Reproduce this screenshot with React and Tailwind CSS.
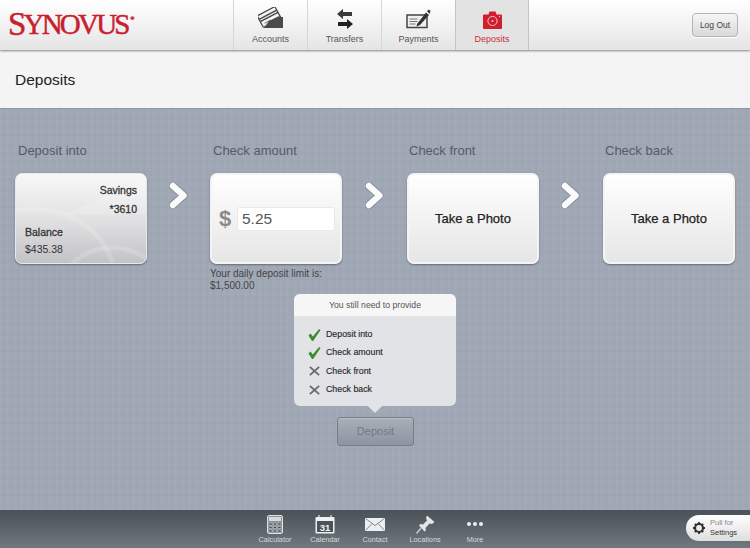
import React from 'react';

const AccountsIcon = () => (
  <svg width="26" height="22" viewBox="0 0 26 22">
    <g transform="rotate(-28 10 10)">
      <rect x="1" y="4" width="20" height="13" rx="1" fill="#f4f4f4" stroke="#444" strokeWidth="1.2" />
      <path d="M1 8h20M1 10.5h20" stroke="#444" strokeWidth="1.4" />
      <path d="M4 14h7" stroke="#777" strokeWidth="1" />
    </g>
    <path d="M6 21 L11 14 L21 9 L22 10 L25 10 V21 Z" fill="#4a4a4a" />
  </svg>
);

const TransfersIcon = () => (
  <svg width="16" height="20" viewBox="0 0 16 20">
    <path d="M0 5 L6 0 V3 H15 V7 H6 V10 Z" fill="#3a3a3a" />
    <path d="M16 15 L10 10 V13 H1 V17 H10 V20 Z" fill="#222" />
  </svg>
);

const PaymentsIcon = () => (
  <svg width="25" height="20" viewBox="0 0 25 20">
    <rect x="1" y="6" width="20" height="12.5" fill="#efefef" stroke="#444" strokeWidth="1.5" />
    <path d="M3.5 10h8M3.5 12.5h8M3.5 15h6" stroke="#777" strokeWidth="1" />
    <path d="M11 15 L20 3.5 L23 6 L14 16 L10.5 17.5 Z" fill="#333" />
    <path d="M21 2 L23 0.5 L24.5 2 L23.5 5 Z" fill="#333" />
  </svg>
);

const CameraIcon = () => (
  <svg width="19" height="18" viewBox="0 0 19 18">
    <path d="M1 3.5 H5.5 L6.5 0.5 H12.5 L13.5 3.5 H18 A1 1 0 0 1 19 4.5 V17 A1 1 0 0 1 18 18 H1 A1 1 0 0 1 0 17 V4.5 A1 1 0 0 1 1 3.5 Z" fill="#cf1f2e" />
    <circle cx="9.5" cy="10" r="4.6" fill="none" stroke="#f3c4c8" strokeWidth="1" />
    <circle cx="9.5" cy="10" r="1" fill="#f3c4c8" />
    <circle cx="16.5" cy="5.5" r="0.7" fill="#f3c4c8" />
  </svg>
);

const CalculatorIcon = () => (
  <svg width="16" height="19" viewBox="0 0 16 19">
    <rect x="0.5" y="0.5" width="15" height="18" rx="1.5" fill="#8b9297" stroke="#dfe2e4" />
    <rect x="2" y="2" width="12" height="4" fill="#d6dadc" />
    <path d="M2 8h3v2H2zM6.5 8h3v2h-3zM11 8h3v2h-3zM2 11.5h3v2H2zM6.5 11.5h3v2h-3zM11 11.5h3v2h-3zM2 15h3v2H2zM6.5 15h3v2h-3zM11 15h3v2h-3z" fill="#3f474d" stroke="#cfd3d6" strokeWidth="0.5" />
  </svg>
);

const CalendarIcon = () => (
  <svg width="20" height="19" viewBox="0 0 20 19">
    <rect x="0.5" y="2" width="19" height="16.5" rx="1" fill="#eef0f1" />
    <rect x="2" y="6" width="16" height="11" fill="#4b5359" />
    <path d="M4 0v3M16 0v3" stroke="#e6e8ea" strokeWidth="1.2" />
    <text x="10" y="15.5" textAnchor="middle" fontSize="9.5" fontWeight="700" fill="#f2f3f4" fontFamily="Liberation Sans, sans-serif">31</text>
  </svg>
);

const MailIcon = () => (
  <svg width="20" height="13" viewBox="0 0 20 13">
    <rect width="20" height="13" fill="#eceeef" />
    <path d="M0.5 0.5 L10 7.5 L19.5 0.5M0.5 12.5 L7 5.5M19.5 12.5 L13 5.5" fill="none" stroke="#6a7278" strokeWidth="0.8" />
  </svg>
);

const PinIcon = () => (
  <svg width="19" height="19" viewBox="0 0 19 19">
    <path d="M11 0.5 L18.5 7 L16 9 L13.5 8.5 L9.5 13 L10 15.5 L8.5 16.5 L3 10.5 L4.5 9 L7 9.5 L11 5.5 L10 3 Z" fill="#e3e6e8" />
    <path d="M5 13 L0.5 18.5" stroke="#d4d8da" strokeWidth="1.2" />
  </svg>
);

const GearIcon = () => (
  <svg width="14" height="14" viewBox="0 0 14 14">
    <circle cx="7" cy="7" r="4" fill="none" stroke="#333" strokeWidth="2.2" />
    <path d="M7 1v2M7 11v2M1 7h2M11 7h2M2.8 2.8l1.4 1.4M9.8 9.8l1.4 1.4M2.8 11.2l1.4-1.4M9.8 4.2l1.4-1.4" stroke="#333" strokeWidth="1.8" />
  </svg>
);

const Check = () => (
  <svg width="14" height="14" viewBox="0 0 14 14">
    <path d="M0.5 7.5 L2.8 5.5 L5.2 8.5 L12 0.5 L13.5 1.5 L5.5 13.5 L4.3 13.5 Z" fill="#3f8a2c" />
  </svg>
);

const Cross = () => (
  <svg width="14" height="14" viewBox="0 0 14 14">
    <path d="M2 2.5 L12 11.5M12 2.5 L2 11.5" stroke="#6a6a6a" strokeWidth="2" />
  </svg>
);

const Chevron = ({ width }) => (
  <div className={`flex shrink-0 justify-center pt-[39px] ${width}`}>
    <svg width="20" height="27" viewBox="0 0 20 27">
      <path d="M4 4 L14.5 13.5 L4 23" fill="none" stroke="#868e9b" strokeWidth="8" strokeLinecap="round" strokeLinejoin="round" />
      <path d="M4 4 L14.5 13.5 L4 23" fill="none" stroke="#fbfbfb" strokeWidth="6.4" strokeLinecap="round" strokeLinejoin="round" />
    </svg>
  </div>
);

const tabs = [
  { label: 'Accounts', icon: <AccountsIcon /> },
  { label: 'Transfers', icon: <TransfersIcon /> },
  { label: 'Payments', icon: <PaymentsIcon /> },
  { label: 'Deposits', icon: <CameraIcon />, active: true },
];

const tools = [
  { label: 'Calculator', icon: <CalculatorIcon /> },
  { label: 'Calendar', icon: <CalendarIcon /> },
  { label: 'Contact', icon: <MailIcon /> },
  { label: 'Locations', icon: <PinIcon /> },
  {
    label: 'More',
    icon: (
      <div className="flex gap-[2px]">
        <span className="h-[4px] w-[4px] rounded-full bg-[#eceeef]" />
        <span className="h-[4px] w-[4px] rounded-full bg-[#eceeef]" />
        <span className="h-[4px] w-[4px] rounded-full bg-[#eceeef]" />
      </div>
    ),
  },
];

const needs = [
  { label: 'Deposit into', done: true },
  { label: 'Check amount', done: true },
  { label: 'Check front', done: false },
  { label: 'Check back', done: false },
];

const cardClass =
  'h-[91px] w-[132px] rounded-[7px] border-2 border-[#f4f4f5] bg-gradient-to-b from-white to-[#e6e6e6] shadow-[0_1px_2px_rgba(60,65,75,0.6)]';
const labelClass = 'mb-[14px] h-[16px] pl-[3px] text-[13px] leading-[16px] text-[#565b64]';
const labelClassRight = 'mb-[14px] h-[16px] pl-[2px] text-[13px] leading-[16px] text-[#565b64]';
const photoClass = `${cardClass} flex items-center justify-center pt-[1px] text-[13px] text-[#222] [-webkit-text-stroke:0.25px_#222]`;

const App = () => {
  return (
    <div className="flex h-[548px] w-[750px] flex-col overflow-hidden font-['Liberation_Sans',sans-serif]">
      <header className="relative z-10 flex h-[50px] items-stretch justify-between bg-gradient-to-b from-white to-[#e5e5e5] shadow-[0_1px_2px_rgba(0,0,0,0.45)]">
        <div className="flex w-[233px] items-center pb-[1px] pl-[8px] font-['Liberation_Serif',serif] leading-none tracking-[-2.8px] text-[#c9202f] [-webkit-text-stroke:0.5px_#c9202f]">
          <span className="text-[33px]">S</span>
          <span className="text-[29px]">YNOVUS</span>
          <span className="mb-[12px] ml-[3px] text-[5px] tracking-normal">®</span>
        </div>
        <nav className="flex flex-1">
          {tabs.map(tab => (
            <div
              key={tab.label}
              className={
                tab.active
                  ? 'flex w-[74px] flex-col items-center border-x border-x-[#c4c4c4] bg-[#e3e3e3]'
                  : 'flex w-[74px] flex-col items-center border-l border-l-[#d6d6d6]'
              }
            >
              <div className="flex h-[33px] items-end justify-center pb-[4px]">{tab.icon}</div>
              <span className={tab.active ? 'mt-[1px] text-[9px] leading-[11px] text-[#c9303c]' : 'mt-[1px] text-[9px] leading-[11px] text-[#555]'}>
                {tab.label}
              </span>
            </div>
          ))}
        </nav>
        <div className="flex items-center pr-[12px]">
          <button className="h-[24px] w-[46px] rounded-[4px] border border-[#b5b5b5] bg-gradient-to-b from-[#f6f6f6] to-[#d8d8d8] text-[8.5px] text-[#444] shadow-[0_1px_0_#fff]">
            Log Out
          </button>
        </div>
      </header>

      <div className="flex h-[58px] items-center bg-[#f4f4f4] pl-[15px] pt-[2px] text-[15.5px] text-[#222]">Deposits</div>

      <main className="flex-1 border-t border-t-[#8d95a1] bg-[#a0a8b5] bg-[repeating-linear-gradient(90deg,rgba(255,255,255,0.03)_0_1px,transparent_1px_4px,rgba(70,80,95,0.03)_4px_5px,transparent_5px_7px),repeating-linear-gradient(0deg,rgba(255,255,255,0.025)_0_1px,transparent_1px_5px,rgba(70,80,95,0.03)_5px_6px,transparent_6px_9px)] pt-[34px]">
        <div className="flex pl-[15px]">
          <section className="w-[132px]">
            <div className={labelClass}>Deposit into</div>
            <div className="relative h-[91px] w-[132px] overflow-hidden rounded-[7px] border border-[#e8e8e8] bg-gradient-to-b from-[#f8f8f8] via-[#e2e2e3] to-[#c2c3c6] shadow-[0_1px_2px_rgba(60,65,75,0.6)]">
              <svg className="absolute inset-0" width="132" height="91" viewBox="0 0 132 91">
                <path d="M50 40 L132 2 V40 Z" fill="#fff" opacity="0.18" />
                <path d="M0 37 C45 30 85 50 97 91" fill="none" stroke="#fff" strokeWidth="5" opacity="0.16" />
                <path d="M55 91 C75 70 110 68 132 86" fill="none" stroke="#fff" strokeWidth="5" opacity="0.16" />
              </svg>
              <div className="relative flex h-full flex-col justify-between px-[9px] pb-[7px] pt-[10px] text-[10.5px] text-[#333]">
                <div className="text-right leading-[13px] [-webkit-text-stroke:0.3px_#333]">
                  <div>Savings</div>
                  <div className="mt-[6px]">*3610</div>
                </div>
                <div className="leading-[13px]">
                  <div className="[-webkit-text-stroke:0.3px_#333]">Balance</div>
                  <div className="mt-[4px]">$435.38</div>
                </div>
              </div>
            </div>
          </section>
          <Chevron width="w-[63px]" />
          <section className="w-[132px]">
            <div className={labelClass}>Check amount</div>
            <div className={`${cardClass} flex items-center pl-[7px] pr-[5px]`}>
              <span className="w-[18px] text-[22px] font-bold leading-none text-[#8a8a8a]">$</span>
              <div className="flex h-[24px] flex-1 items-center rounded-[3px] border border-[#e9e9e9] bg-white pl-[4px] text-[15.5px] text-[#555]">
                5.25
              </div>
            </div>
            <div className="mt-[4px] w-[140px] text-[10px] leading-[11.5px] text-[#444]">
              Your daily deposit limit is:
              <br />
              $1,500.00
            </div>
          </section>
          <Chevron width="w-[65px]" />
          <section className="w-[132px]">
            <div className={labelClassRight}>Check front</div>
            <div className={photoClass}>Take a Photo</div>
          </section>
          <Chevron width="w-[64px]" />
          <section className="w-[132px]">
            <div className={labelClassRight}>Check back</div>
            <div className={photoClass}>Take a Photo</div>
          </section>
        </div>

        <div className="mt-[3px] flex flex-col items-center">
          <div className="relative w-[162px] rounded-[6px] bg-[#e1e3e7]">
            <div className="flex h-[22px] items-center justify-center rounded-t-[6px] bg-[#f6f6f7] pt-[1px] text-[8.7px] text-[#555]">
              You still need to provide
            </div>
            <ul className="px-[14px] pb-[8px] pt-[9px]">
              {needs.map(item => (
                <li key={item.label} className="flex h-[18.3px] items-center gap-[5px] pt-[1px] text-[8.8px] text-[#2a2a2a] [-webkit-text-stroke:0.15px_#2a2a2a]">
                  <span className="flex w-[13px] justify-center">{item.done ? <Check /> : <Cross />}</span>
                  {item.label}
                </li>
              ))}
            </ul>
            <div className="absolute -bottom-[5px] left-[76px] h-[10px] w-[10px] rotate-45 bg-[#e1e3e7]" />
          </div>
          <button className="ml-[1px] mt-[11px] h-[29px] w-[77px] rounded-[3px] border border-[#767d88] bg-gradient-to-b from-[#a9afb9] to-[#8e95a0] text-[11px] text-[#747a84] shadow-[inset_0_1px_0_rgba(255,255,255,0.2)]">
            Deposit
          </button>
        </div>
      </main>

      <footer className="relative flex h-[38px] justify-center bg-gradient-to-b from-[#4a5258] to-[#70797f] pt-[4px]">
        {tools.map(tool => (
          <div key={tool.label} className="flex w-[50px] flex-col items-center">
            <div className="flex h-[20px] items-center justify-center">{tool.icon}</div>
            <span className="mt-[1px] text-[7.3px] leading-[10px] text-[#d5d9dc]">{tool.label}</span>
          </div>
        ))}
        <div className="absolute bottom-[7px] right-0 flex h-[26px] w-[64px] items-center gap-[4px] rounded-l-[13px] bg-gradient-to-b from-white to-[#dedede] pl-[6px]">
          <GearIcon />
          <div className="text-[7.5px] leading-[10px] text-[#555]">
            <div className="text-[#888]">Pull for</div>
            <div className="font-medium text-[#333]">Settings</div>
          </div>
        </div>
      </footer>
    </div>
  );
};

export default App;
